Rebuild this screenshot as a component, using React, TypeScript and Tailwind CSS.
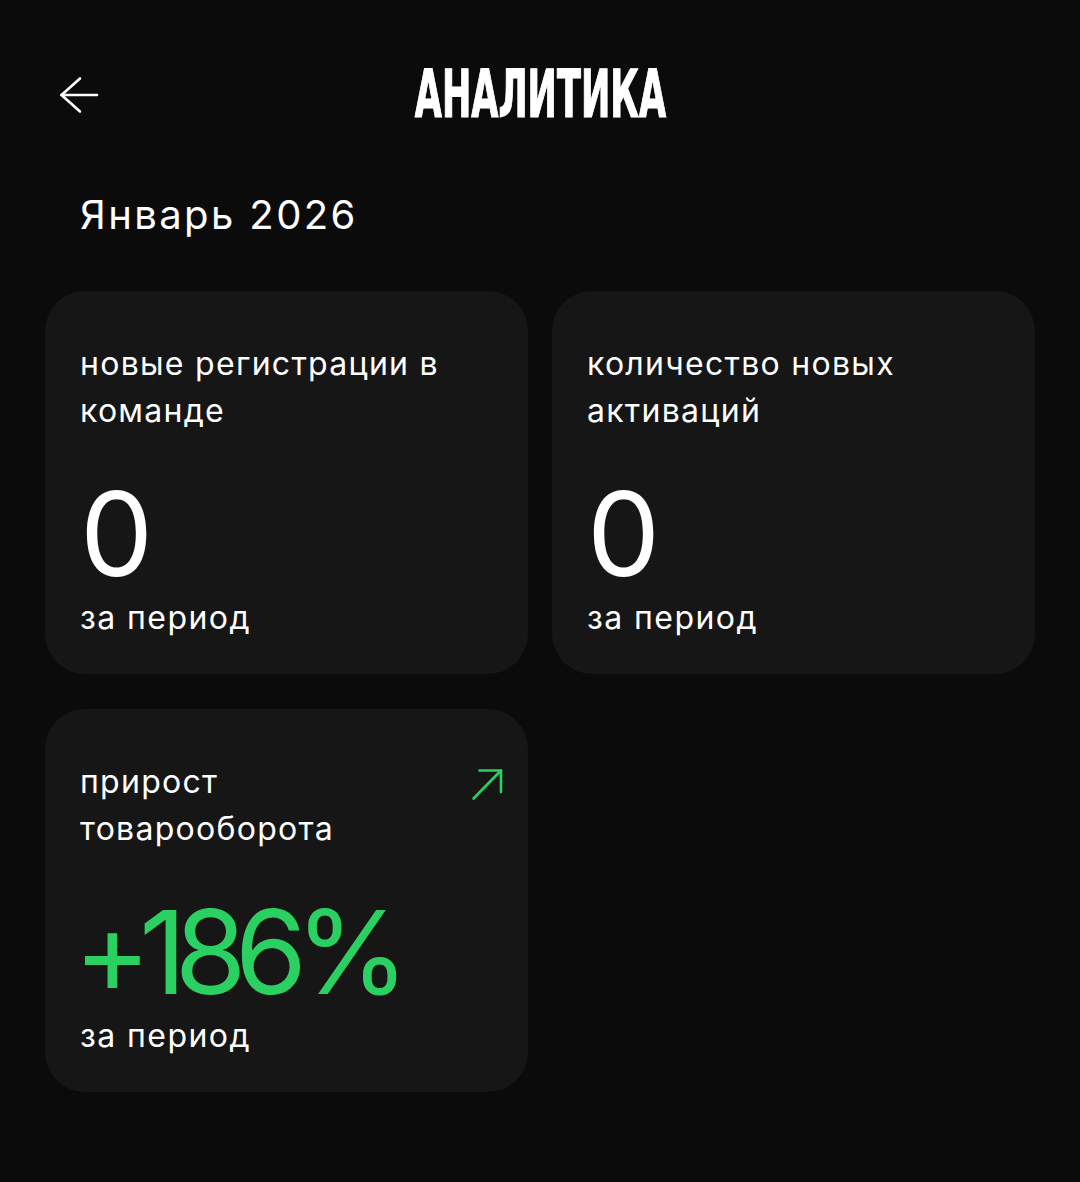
import type { ReactNode } from 'react';

const sans = "font-['Inter','Noto_Sans',sans-serif]";

function BackArrow() {
  return (
    <svg width="40" height="40" viewBox="0 0 40 40" fill="none" stroke="#ffffff" strokeWidth="2.6" strokeLinecap="round" strokeLinejoin="round">
      <path d="M38 20H2.5" />
      <path d="M21 3.5 2.5 20 21 36.5" />
    </svg>
  );
}

function GrowthArrow() {
  return (
    <svg width="31" height="32" viewBox="0 0 31 32" fill="none" stroke="#2bd062" strokeWidth="2.6" strokeLinecap="round" strokeLinejoin="round">
      <path d="M1.5 30.5 29 2.5" />
      <path d="M7.5 2.5H29V24" />
    </svg>
  );
}

type StatCardProps = {
  label: ReactNode;
  value: string;
  accent?: boolean;
  icon?: ReactNode;
};

function StatCard({ label, value, accent, icon }: StatCardProps) {
  return (
    <div className="flex flex-col rounded-[40px] bg-[#161616] pt-[49px] pb-[33px] pl-[35px] pr-[25px]">
      <div className="flex items-start justify-between">
        <div className="max-w-[400px] text-[32px] leading-[47px] tracking-[0.04em] text-white">{label}</div>
        {icon && <div className="mt-[10px] shrink-0">{icon}</div>}
      </div>
      <div
        className={
          'mt-[42px] text-[116px] leading-[116px] font-normal ' +
          (accent ? '-ml-[6px] tracking-[-0.1em] text-[#2bd062]' : 'tracking-[-0.03em] text-white')
        }
      >
        {value}
      </div>
      <div className="mt-[2px] text-[32px] leading-[47px] tracking-[0.045em] text-white">за период</div>
    </div>
  );
}

export default function App() {
  return (
    <div className={`min-h-screen bg-[#0b0b0b] px-[45px] pb-16 ${sans}`}>
      {/* Header */}
      <header className="grid grid-cols-[1fr_auto_1fr] items-center pt-[62px]">
        <button className="ml-[14px] justify-self-start" aria-label="Назад">
          <BackArrow />
        </button>
        <h1 className="text-center text-[65px] leading-[65px] font-bold uppercase text-white [-webkit-text-stroke:1.2px_#ffffff] font-['Liberation_Sans_Narrow','DejaVu_Sans_Condensed','Liberation_Sans',sans-serif]">
          <span className="inline-block scale-x-[0.6]">Аналитика</span>
        </h1>
        <div />
      </header>

      <h2 className="mt-[64px] pl-[35px] text-[40px] leading-[48px] font-normal tracking-[0.06em] text-white">Январь 2026</h2>

      {/* Stats */}
      <section className="mt-[52px] grid grid-cols-2 gap-x-[24px] gap-y-[35px]">
        <StatCard label="новые регистрации в команде" value="0" />
        <StatCard label="количество новых активаций" value="0" />
        <StatCard
          label={<span className="block max-w-[300px]">прирост товарооборота</span>}
          value="+186%"
          accent
          icon={<GrowthArrow />}
        />
      </section>
    </div>
  );
}
